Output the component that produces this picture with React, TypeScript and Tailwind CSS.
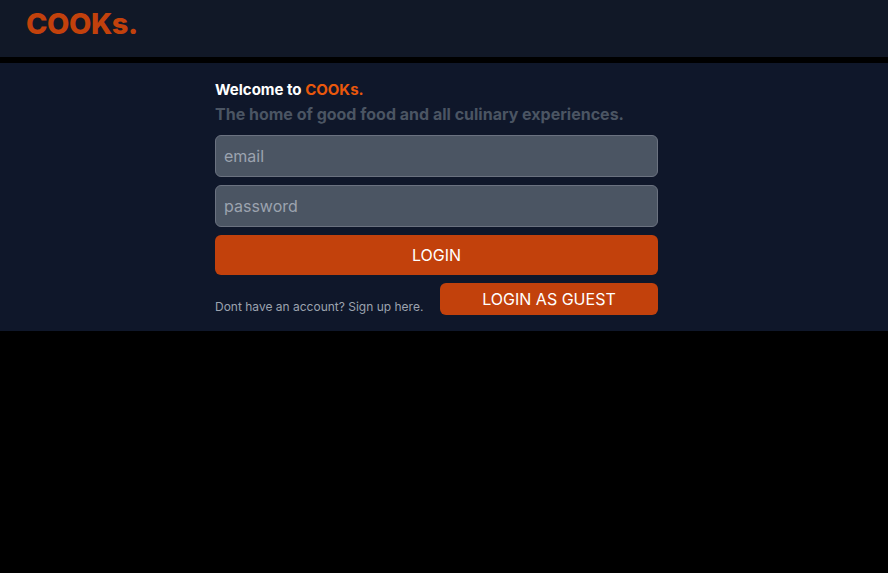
import React from "react";

export default function App() {
  return (
    <div className="min-h-[573px] w-full bg-black" style={{ fontFamily: "Inter, 'Noto Sans', sans-serif" }}>
      <header className="h-[57px] bg-[#111827] flex items-start pt-[9px] px-[26px]">
        <h1 className="text-[29px] font-extrabold text-[#c2410c] tracking-[-0.5px] leading-none">COOKs.</h1>
      </header>
      <main className="mt-[6px] bg-[#0f172a] h-[268px] pt-[18px]">
        <div className="ml-[215px] w-[443px] flex flex-col">
          <p className="text-[15px] font-bold text-white leading-[18px]">
            Welcome to <span className="text-[#ea580c]">COOKs.</span>
          </p>
          <p className="text-[16px] font-bold text-[#4b5563] leading-[20px] mt-[5px]">
            The home of good food and all culinary experiences.
          </p>
          <input
            className="mt-[11px] h-[42px] w-full rounded-md bg-[#4b5563] border border-[#6b7280] px-[8px] text-[16px] text-white placeholder-[#9ca3af] outline-none"
            placeholder="email"
          />
          <input
            type="password"
            className="mt-[8px] h-[42px] w-full rounded-md bg-[#4b5563] border border-[#6b7280] px-[8px] text-[16px] text-white placeholder-[#9ca3af] outline-none"
            placeholder="password"
          />
          <button className="mt-[8px] h-[40px] w-full rounded-md bg-[#c2410c] text-white text-[16px]">LOGIN</button>
          <div className="mt-[8px] flex items-end justify-between">
            <span className="text-[12px] leading-[16px] text-[#9ca3af]">Dont have an account? Sign up here.</span>
            <button className="h-[32px] w-[218px] rounded-md bg-[#c2410c] text-white text-[16px]">LOGIN AS GUEST</button>
          </div>
        </div>
      </main>
    </div>
  );
}
